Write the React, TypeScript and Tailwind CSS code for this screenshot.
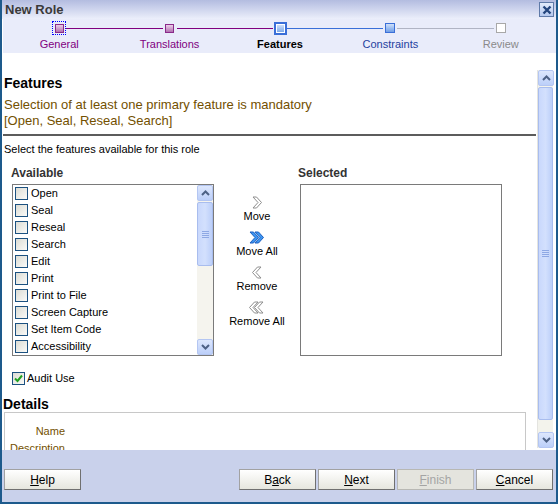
import React from "react";

const FONT = "font-['Liberation_Sans',Arial,sans-serif]";

type StepKind = "visited" | "current" | "unvisited" | "disabled";

interface Step {
  label: string;
  kind: StepKind;
  focus?: boolean;
  left: string;
  right: string;
  text: string;
}

const STEPS: Step[] = [
  { label: "General", kind: "visited", focus: true, left: "bg-transparent", right: "bg-[#800080]", text: "text-[#800080]" },
  { label: "Translations", kind: "visited", left: "bg-[#800080]", right: "bg-[#800080]", text: "text-[#800080]" },
  { label: "Features", kind: "current", left: "bg-[#800080]", right: "bg-[#3a6fd8]", text: "font-bold text-black" },
  { label: "Constraints", kind: "unvisited", left: "bg-[#3a6fd8]", right: "bg-[#b0b4c4]", text: "text-[#1f3f9f]" },
  { label: "Review", kind: "disabled", left: "bg-[#b0b4c4]", right: "bg-transparent", text: "text-[#8a8a8a]" },
];

const FEATURES = [
  "Open",
  "Seal",
  "Reseal",
  "Search",
  "Edit",
  "Print",
  "Print to File",
  "Screen Capture",
  "Set Item Code",
  "Accessibility",
];

function StopIcon({ kind, focus }: { kind: StepKind; focus?: boolean }) {
  let box: React.ReactNode;
  if (kind === "visited") {
    box = <div className="h-[9px] w-[9px] border border-[#8a2a8a] bg-linear-to-b from-[#ecd0ea] to-[#b070b0]" />;
  } else if (kind === "current") {
    box = (
      <div className="h-[13px] w-[13px] border-2 border-[#3a6fd8] bg-white p-px">
        <div className="h-full w-full bg-linear-to-b from-[#cfe0fa] to-[#7eaae8]" />
      </div>
    );
  } else if (kind === "unvisited") {
    box = <div className="h-[10px] w-[10px] border border-[#3a6fd8] bg-linear-to-b from-[#cfe0fa] to-[#6f9ee6]" />;
  } else {
    box = <div className="h-[10px] w-[10px] border border-[#a8a8a8] bg-white" />;
  }
  return (
    <div
      className={
        focus
          ? "flex h-[14px] w-[14px] items-center justify-center border border-dotted border-[#0000ff]"
          : "flex h-[14px] w-[14px] items-center justify-center"
      }
    >
      {box}
    </div>
  );
}

function Chevron({ dir, double, blue }: { dir: "right" | "left"; double?: boolean; blue?: boolean }) {
  const fill = blue ? "#3d95f0" : "#ffffff";
  const stroke = blue ? "#1d5fc0" : "#8e8e8e";
  const one = "M2 1 L5.5 1 L10.5 6.5 L5.5 12 L2 12 L7 6.5 Z";
  const two = "M7 1 L10.5 1 L15.5 6.5 L10.5 12 L7 12 L12 6.5 Z";
  return (
    <svg
      width={double ? 17 : 12}
      height={13}
      viewBox={double ? "0 0 17 13" : "0 0 12 13"}
      style={{ transform: dir === "left" ? "scaleX(-1)" : undefined }}
    >
      <path d={one} fill={fill} stroke={stroke} strokeWidth="1" strokeLinejoin="round" />
      {double && <path d={two} fill={fill} stroke={stroke} strokeWidth="1" strokeLinejoin="round" />}
    </svg>
  );
}

function ScrollArrow({ up }: { up?: boolean }) {
  return (
    <div className="flex h-[16px] w-[16px] items-center justify-center rounded-[2px] border border-[#b4c6f2] bg-linear-to-b from-[#dde7fd] to-[#bccff9]">
      <svg width="9" height="6" viewBox="0 0 9 6">
        <path
          d={up ? "M1 5 L4.5 1.5 L8 5" : "M1 1 L4.5 4.5 L8 1"}
          fill="none"
          stroke="#4d6185"
          strokeWidth="2"
        />
      </svg>
    </div>
  );
}

function Thumb({ className }: { className: string }) {
  return (
    <div
      className={`flex items-center justify-center rounded-[2px] border border-[#a9bdee] bg-linear-to-r from-[#c9d8fc] via-[#d3e0fd] to-[#bccff9] ${className}`}
    >
      <div className="flex flex-col gap-px">
        <div className="h-px w-[7px] bg-[#8ea8e4]" />
        <div className="h-px w-[7px] bg-[#8ea8e4]" />
        <div className="h-px w-[7px] bg-[#8ea8e4]" />
        <div className="h-px w-[7px] bg-[#8ea8e4]" />
      </div>
    </div>
  );
}

function Checkbox({ checked }: { checked?: boolean }) {
  return (
    <div className="flex h-[13px] w-[13px] shrink-0 items-center justify-center border border-[#1c5180] bg-linear-to-br from-[#dcdcd4] to-[#fafaf8]">
      {checked && (
        <svg width="9" height="9" viewBox="0 0 9 9">
          <path d="M1 4.5 L3.5 7 L8 1.5" fill="none" stroke="#21a121" strokeWidth="2" />
        </svg>
      )}
    </div>
  );
}

function Btn({ label, u, width, disabled }: { label: string; u: number; width: string; disabled?: boolean }) {
  return (
    <button
      className={
        disabled
          ? `h-[21px] ${width} border border-[#b8b8b4] bg-[#e4e4de] text-[12px] text-[#a4a4a4]`
          : `h-[21px] ${width} border border-[#a2a2a2] border-r-[#707070] border-b-[#707070] bg-linear-to-b from-white to-[#e6e6de] text-[12px] text-black`
      }
    >
      {label.slice(0, u)}
      <span className="underline">{label[u]}</span>
      {label.slice(u + 1)}
    </button>
  );
}

export default function App() {
  return (
    <div className={`${FONT} flex h-[504px] w-[558px] flex-col border-2 border-t-0 border-[#1d5a8c] bg-white`}>
      {/* title bar */}
      <div className="flex h-[19px] shrink-0 items-center justify-between bg-linear-to-b from-[#b3bce0] to-[#eceffb] pl-[3px] pr-[2px]">
        <span className="pt-px text-[13px] font-bold text-[#3a3a3a]">New Role</span>
        <div className="flex h-[15px] w-[15px] items-center justify-center border border-[#5f7aa8] bg-linear-to-b from-[#e2ebfb] to-[#b4c8ee]">
          <svg width="10" height="10" viewBox="0 0 10 10">
            <path d="M1.5 1.5 L8.5 8.5 M8.5 1.5 L1.5 8.5" stroke="#24457d" strokeWidth="2.4" />
          </svg>
        </div>
      </div>

      {/* train */}
      <div className="grid h-[34px] shrink-0 grid-cols-5 border-l border-white bg-[#e9ecfa] pl-px">
        {STEPS.map((s) => (
          <div key={s.label} className="flex flex-col items-center pt-[2px]">
            <div className="flex h-[14px] w-full items-center">
              <div className={`h-px flex-1 ${s.left}`} />
              <StopIcon kind={s.kind} focus={s.focus} />
              <div className={`h-px flex-1 ${s.right}`} />
            </div>
            <div className={`mt-[2px] text-[11px] leading-[14px] ${s.text}`}>{s.label}</div>
          </div>
        ))}
      </div>

      {/* content */}
      <div className="flex min-h-0 flex-1">
        <div className="min-w-0 flex-1 overflow-hidden">
          <div className="pl-[2px] pt-[22px] text-[14px] font-bold leading-[17px] text-black">Features</div>
          <div className="mt-[5px] pl-[2px] text-[13px] leading-[16px] text-[#735000]">
            <div>Selection of at least one primary feature is mandatory</div>
            <div>[Open, Seal, Reseal, Search]</div>
          </div>
          <div className="mx-px mt-[5px] h-[2px] bg-[#5c5c5c]" />
          <div className="mt-[6px] pl-[2px] text-[11px] leading-[14px] text-black">
            Select the features available for this role
          </div>

          <div className="mt-[10px] flex items-start pl-[10px]">
            <div className="w-[202px]">
              <div className="-ml-px text-[12px] font-bold leading-[14px] text-[#333333]">Available</div>
              <div className="mt-[4px] flex h-[172px] border border-[#7a7a7a]">
                <div className="flex-1">
                  {FEATURES.map((f) => (
                    <div key={f} className="flex h-[17px] items-center pl-[2px]">
                      <Checkbox />
                      <span className="ml-[3px] text-[11px] text-black">{f}</span>
                    </div>
                  ))}
                </div>
                <div className="flex w-[16px] flex-col bg-[#f5f4ee]">
                  <ScrollArrow up />
                  <Thumb className="mt-px h-[64px]" />
                  <div className="flex-1" />
                  <ScrollArrow />
                </div>
              </div>
            </div>

            <div className="flex w-[86px] flex-col items-center gap-[7px] pt-[29px] text-[11px] leading-[14px] text-black">
              <div className="flex flex-col items-center">
                <div className="flex h-[14px] items-center"><Chevron dir="right" /></div>
                <span>Move</span>
              </div>
              <div className="flex flex-col items-center">
                <div className="flex h-[14px] items-center"><Chevron dir="right" double blue /></div>
                <span>Move All</span>
              </div>
              <div className="flex flex-col items-center">
                <div className="flex h-[14px] items-center"><Chevron dir="left" /></div>
                <span>Remove</span>
              </div>
              <div className="flex flex-col items-center">
                <div className="flex h-[14px] items-center"><Chevron dir="left" double /></div>
                <span>Remove All</span>
              </div>
            </div>

            <div className="w-[202px]">
              <div className="-ml-[2px] text-[12px] font-bold leading-[14px] text-[#333333]">Selected</div>
              <div className="mt-[4px] h-[172px] border border-[#7a7a7a]" />
            </div>
          </div>

          <div className="mt-[15px] flex items-center pl-[10px]">
            <Checkbox checked />
            <span className="ml-[2px] text-[11px] leading-[14px] text-black">Audit Use</span>
          </div>

          <div className="mt-[11px] pl-px text-[14px] font-bold leading-[16px] text-black">Details</div>
          <div className="ml-[2px] w-[522px] border border-[#c8c8c8] pt-[10px] text-[11px] leading-[17px] text-[#735000]">
            <div className="w-[60px] text-right">Name</div>
            <div className="w-[60px] text-right">Description</div>
          </div>
        </div>

        {/* main scrollbar */}
        <div className="mb-[2px] mr-[3px] mt-[17px] flex w-[16px] flex-col border-l border-[#e4e4e0] bg-[#f3f3ec]">
          <ScrollArrow up />
          <Thumb className="mt-px h-[333px]" />
          <div className="flex-1" />
          <ScrollArrow />
        </div>
      </div>

      {/* footer */}
      <div className="flex h-[52px] shrink-0 items-start bg-[#c9d1eb] pl-[2px] pr-[3px] pt-[19px]">
        <Btn label="Help" u={0} width="w-[77px]" />
        <div className="flex-1" />
        <Btn label="Back" u={1} width="w-[77px]" />
        <div className="w-[2px]" />
        <Btn label="Next" u={0} width="w-[77px]" />
        <div className="w-[2px]" />
        <Btn label="Finish" u={0} width="w-[77px]" disabled />
        <div className="w-[2px]" />
        <Btn label="Cancel" u={0} width="w-[77px]" />
      </div>
    </div>
  );
}
